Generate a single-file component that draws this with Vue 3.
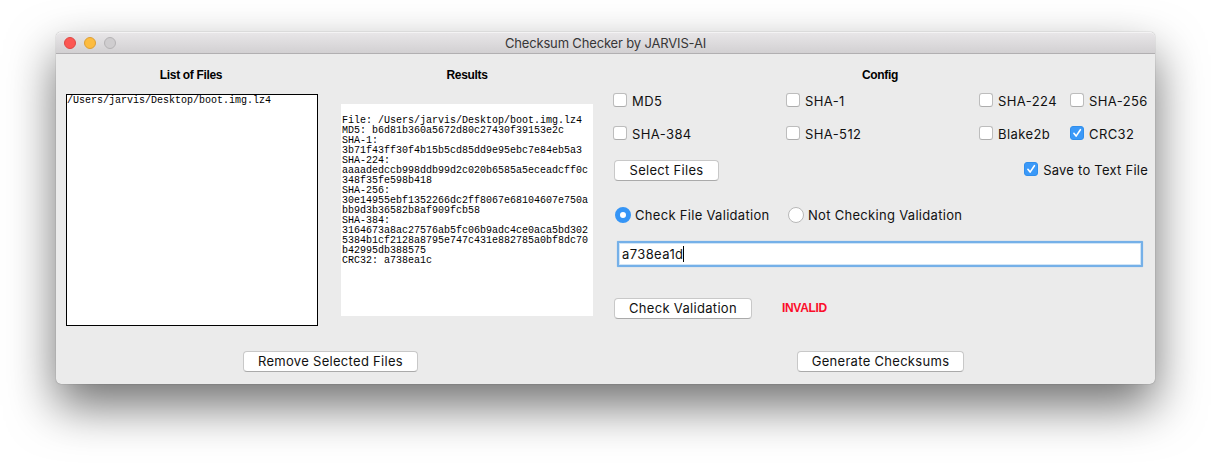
<script setup>
import { ref } from 'vue'

const algorithms = ref([
  { name: 'MD5', on: false },
  { name: 'SHA-1', on: false },
  { name: 'SHA-224', on: false },
  { name: 'SHA-256', on: false },
  { name: 'SHA-384', on: false },
  { name: 'SHA-512', on: false },
  { name: 'Blake2b', on: false },
  { name: 'CRC32', on: true }
])

const results = `
File: /Users/jarvis/Desktop/boot.img.lz4
MD5: b6d81b360a5672d80c27430f39153e2c
SHA-1:
3b71f43ff30f4b15b5cd85dd9e95ebc7e84eb5a3
SHA-224:
aaaadedccb998ddb99d2c020b6585a5eceadcff0c
348f35fe598b418
SHA-256:
30e14955ebf1352266dc2ff8067e68104607e750a
bb9d3b36582b8af909fcb58
SHA-384:
3164673a8ac27576ab5fc06b9adc4ce0aca5bd302
5384b1cf2128a8795e747c431e882785a0bf8dc70
b42995db388575
CRC32: a738ea1c`
</script>

<template>
  <div class="desktop">
    <div class="window">
      <header class="titlebar">
        <span class="lights"><i class="red"></i><i class="amber"></i><i class="grey"></i></span>
        <span class="title">Checksum Checker by JARVIS-AI</span>
      </header>
      <main class="body">
        <section class="files">
          <h2><span>List of Files</span></h2>
          <div class="list mono">/Users/jarvis/Desktop/boot.img.lz4</div>
        </section>
        <section class="results">
          <h2><span>Results</span></h2>
          <div class="output mono">{{ results }}</div>
        </section>
        <section class="config">
          <h2><span>Config</span></h2>
          <div class="algos">
            <div v-for="a in algorithms" :key="a.name" class="check">
              <span class="box" :class="{ on: a.on }">
                <svg v-if="a.on" viewBox="0 0 14 14"><path d="M3.9 7.3 6.1 10.1 10.4 3.7" /></svg>
              </span>
              <span class="label">{{ a.name }}</span>
            </div>
          </div>
          <div class="row actions">
            <button class="btn select"><span>Select Files</span></button>
            <div class="check">
              <span class="box on">
                <svg viewBox="0 0 14 14"><path d="M3.9 7.3 6.1 10.1 10.4 3.7" /></svg>
              </span>
              <span class="label save">Save to Text File</span>
            </div>
          </div>
          <div class="row radios">
            <div class="radio first"><span class="dot on"></span><span class="label">Check File Validation</span></div>
            <div class="radio"><span class="dot"></span><span class="label">Not Checking Validation</span></div>
          </div>
          <div class="field"><span class="value">a738ea1d</span><span class="caret"></span></div>
          <div class="row verify">
            <button class="btn validate"><span>Check Validation</span></button>
            <span class="status">INVALID</span>
          </div>
        </section>
        <footer class="foot-left"><button class="btn remove"><span>Remove Selected Files</span></button></footer>
        <footer class="foot-right"><button class="btn generate"><span>Generate Checksums</span></button></footer>
      </main>
    </div>
  </div>
</template>

<style>
body { background: #fff; overflow: hidden; }
</style>

<style scoped>
* { box-sizing: border-box; }
.desktop {
  width: 1211px;
  height: 464px;
  padding: 32px 56px 80px;
  overflow: hidden;
  background: #fff;
  font-family: Inter, Roboto, sans-serif;
  font-size: 13px;
  color: #111;
}
.window {
  width: 1099px;
  height: 352px;
  border-radius: 5px;
  background: #ebebeb;
  box-shadow: 0 0 1px rgba(0, 0, 0, .5), 0 22px 48px rgba(0, 0, 0, .56);
}
.titlebar {
  position: relative;
  height: 22px;
  display: flex;
  align-items: center;
  justify-content: center;
  border-radius: 5px 5px 0 0;
  border-top: 1px solid #f4f3f4;
  border-bottom: 1px solid #b1afb1;
  background: linear-gradient(#e8e6e8, #d2d0d2);
}
.lights { position: absolute; left: 8px; top: 4px; display: flex; gap: 8px; }
.lights i { width: 12px; height: 12px; border-radius: 50%; border-width: 1px; border-style: solid; }
.lights .red { background: #fc5753; border-color: #df4744; }
.lights .amber { background: #fdbc40; border-color: #de9f34; }
.lights .grey { background: #cfcdcf; border-color: #b5b3b5; }
.title { color: #373637; letter-spacing: -.16px; line-height: 20px; white-space: nowrap; padding-bottom: 1px; }
.body {
  height: 330px;
  display: grid;
  grid-template-columns: 252px 252px 535px;
  grid-template-rows: 272px 21px;
  column-gap: 23px;
  row-gap: 25px;
  padding-left: 10px;
}
.config { margin-left: -3px; width: 535px; }
h2 {
  margin: 11px 0 9px;
  height: 20px;
  text-align: center;
  font: bold 12px/20px "Liberation Sans", Arial, sans-serif;
  letter-spacing: -.34px;
  color: #000;
}
.files h2 { padding-right: 2px; }
.config h2 { margin-bottom: 8px; padding-right: 1px; }
.mono {
  font: 10px/10px "Liberation Mono", monospace;
  white-space: pre;
  color: #000;
  background: #fff;
}
.list { height: 232px; border: 1px solid #000; padding-top: 1px; }
.output { height: 212px; margin-top: 19px; padding: 2px 1px; }
.algos {
  display: grid;
  grid-template-columns: 173px 193px 91px 78px;
  grid-template-rows: 14px 14px;
  row-gap: 19px;
}
.check { display: flex; align-items: center; gap: 5px; height: 14px; }
.label { white-space: nowrap; line-height: 16px; letter-spacing: .3px; }
.check .label { padding-top: 2px; letter-spacing: .4px; }
.check .label.save { letter-spacing: .24px; }
.box {
  width: 14px;
  height: 14px;
  flex: none;
  border-radius: 3px;
  border: 1px solid #bdbdbd;
  border-bottom-color: #adadad;
  background: #fff;
}
.box.on { border-color: #2f8eec; background: #3b99f8; }
.box svg { display: block; width: 14px; height: 14px; margin: -1px; }
.box path { fill: none; stroke: #fff; stroke-width: 1.6; stroke-linecap: round; stroke-linejoin: round; }
.row { display: flex; }
.btn {
  height: 21px;
  padding: 0 0 1px;
  border: 1px solid #c8c8c8;
  border-bottom-color: #aaa;
  border-radius: 4px;
  background: #fff;
  font: 13px/18px Inter, Roboto, sans-serif;
  letter-spacing: .3px;
  color: #111;
  white-space: nowrap;
}
.actions { margin: 20px 0 0 1px; justify-content: space-between; width: 534px; }
.actions .check { margin-top: 2px; }
.select { width: 105px; }
.radios { margin: 26px 0 0 2px; }
.radio { display: flex; align-items: center; gap: 4px; height: 16px; }
.radio.first { width: 173px; }
.dot {
  width: 16px;
  height: 16px;
  flex: none;
  border-radius: 50%;
  border: 1px solid #b8b8b8;
  background: #fff;
}
.dot.on { border: 5px solid #3595f6; }
.field {
  margin: 18px 0 0 4px;
  width: 526px;
  height: 26px;
  display: flex;
  align-items: center;
  padding-left: 3px;
  border: 2px solid #75b0e8;
  border-radius: 1px;
  background: #fff;
  box-shadow: 0 0 1px #75b0e8, inset 0 0 0 1px #d0e5f7;
}
.value { letter-spacing: .4px; }
.caret { width: 1px; height: 16px; background: #000; }
.verify { margin: 31px 0 0 1px; }
.validate { width: 138px; }
.status {
  margin-left: 30px;
  font: bold 12px/20px "Liberation Sans", Arial, sans-serif;
  letter-spacing: -.32px;
  color: #fb0d2a;
}
.foot-left, .foot-right { display: flex; }
.foot-left { grid-column: 1 / 3; padding-left: 177px; }
.foot-right { padding-left: 181px; }
.remove { width: 175px; }
.generate { width: 167px; }
</style>
